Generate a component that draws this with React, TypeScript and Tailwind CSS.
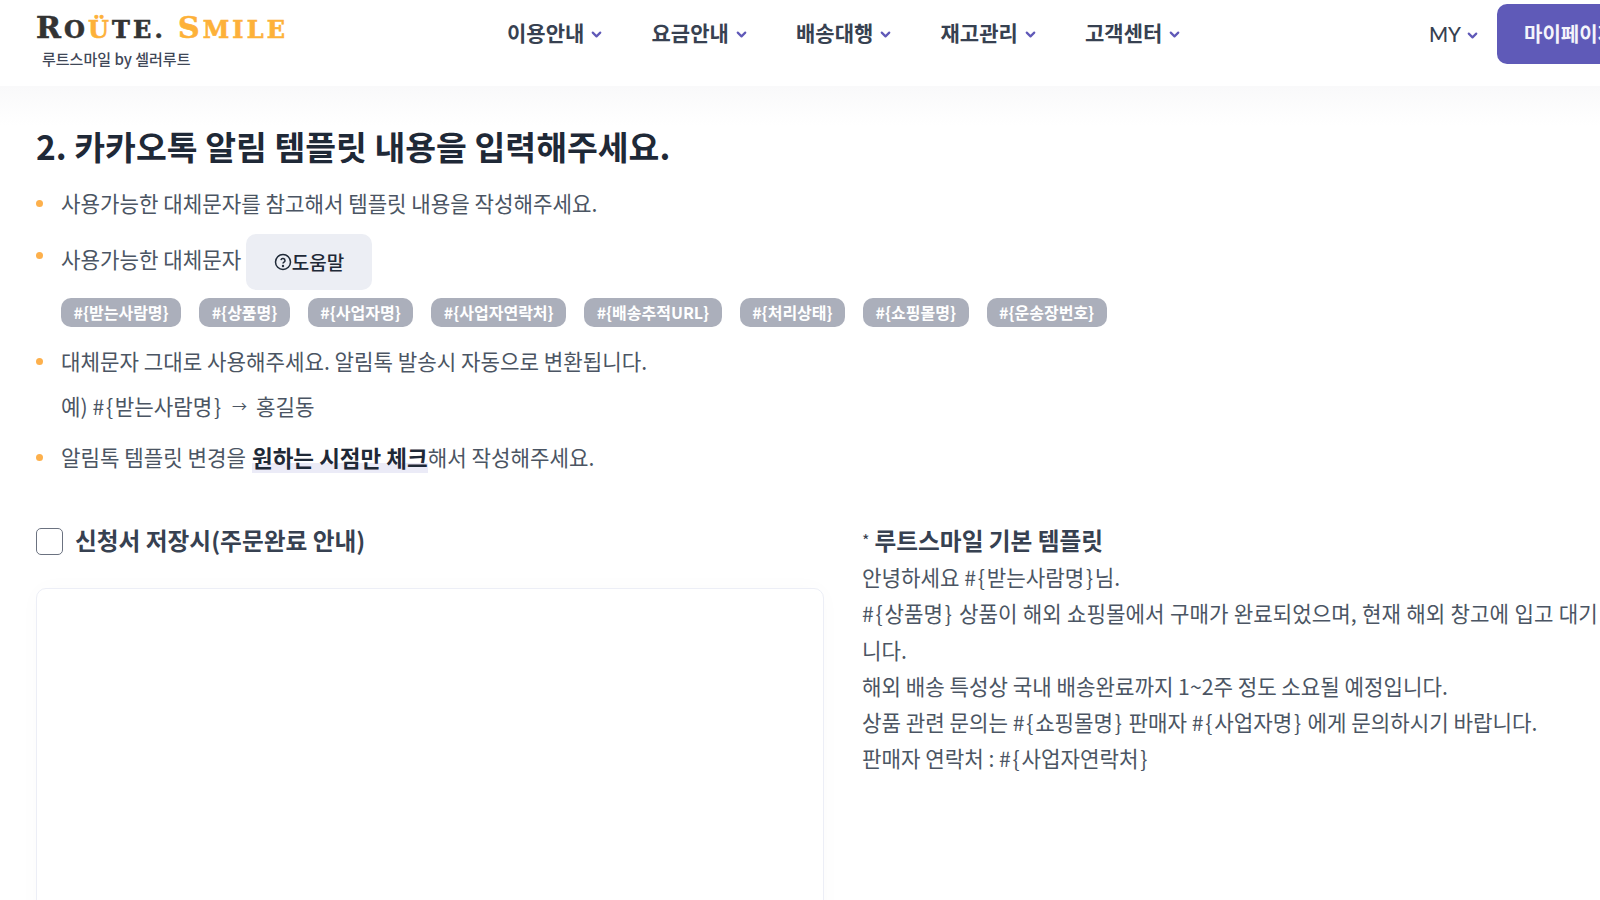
import { ChevronDown } from 'lucide-react';

const font = '[font-family:"Noto_Sans_CJK_KR","Noto_Sans",sans-serif]';

const navItems = ['이용안내', '요금안내', '배송대행', '재고관리', '고객센터'];

const tags = [
  '#{받는사람명}',
  '#{상품명}',
  '#{사업자명}',
  '#{사업자연락처}',
  '#{배송추적URL}',
  '#{처리상태}',
  '#{쇼핑몰명}',
  '#{운송장번호}',
];

function Bullet({ className = '' }: { className?: string }) {
  return <span className={`mr-[18px] h-[7px] w-[7px] shrink-0 rounded-full bg-[#fdb04c] ${className}`} />;
}

function Caret() {
  return <ChevronDown className="mt-[3px] h-[15px] w-[15px] text-[#6059b8]" strokeWidth={3.5} />;
}

// braces sit wider in the reference font
function Var({ name }: { name: string }) {
  return (
    <span>
      #<span className="mx-[1.75px]">&#123;</span>
      {name}
      <span className="mx-[1.75px]">&#125;</span>
    </span>
  );
}

function Logo() {
  const small = 'text-[24px]';
  return (
    <div className='flex h-[39px] items-baseline pt-[4px] text-[30px] font-bold leading-[34px] tracking-[3.1px] text-[#333333] [-webkit-text-stroke:0.6px_currentColor] [font-family:"DejaVu_Serif",serif]'>
      R<span className={small}>O</span>
      <span className={`${small} text-[#fdb139]`}>Ü</span>
      <span className={small}>TE.</span>
      <span className="ml-[12px] text-[#fdb139]">
        S<span className={small}>MILE</span>
      </span>
    </div>
  );
}

function Header() {
  return (
    <header className="flex h-[86px] items-start bg-white shadow-[0_4px_20px_rgba(0,0,0,0.02)]">
      <div className="ml-[36px] w-[424px] pt-[7px]">
        <Logo />
        <div className="ml-[6px] mt-[3px] text-[15px] font-medium leading-[20px] text-[#3f4757]">
          루트스마일 by 셀러루트
        </div>
      </div>
      <nav className="ml-[47px] flex h-[65px] items-center gap-[33.5px]">
        {navItems.map((item) => (
          <div key={item} className="flex w-[111px] items-center gap-[5px] text-[21px] font-bold text-[#374151]">
            {item}
            <Caret />
          </div>
        ))}
      </nav>
      <div className="ml-auto flex h-[66px] items-center">
        <div className='mr-[17px] mt-[2px] flex items-center gap-[4px] text-[20.5px] font-medium text-[#374151] [font-family:"Lato",sans-serif]'>
          MY
          <Caret />
        </div>
        <div className="mr-[-97px] mt-[2px] flex h-[60px] w-[200px] shrink-0 items-center rounded-[10px] bg-[#5f5ab8] pl-[27px] text-[20px] font-bold text-[#f4f4fb]">
          마이페이지
        </div>
      </div>
    </header>
  );
}

function Notices() {
  return (
    <div className="text-[21.2px] leading-[32px] text-[#4b5563]">
      <div className="mt-[17px] flex h-[32px] items-center">
        <Bullet />
        사용가능한 대체문자를 참고해서 템플릿 내용을 작성해주세요.
      </div>
      <div className="mt-[15px] flex h-[56px] items-center">
        <Bullet className="mb-[14px]" />
        <span className="mb-[6px]">사용가능한 대체문자</span>
        <div className="ml-[5px] flex h-[56px] w-[125.5px] items-center justify-center rounded-[10px] bg-[#eceef4] text-[19px] font-medium text-[#1f2937]">
          <svg viewBox="0 0 24 24" className="h-[18px] w-[18px]" fill="none" stroke="currentColor" strokeWidth="2">
            <circle cx="12" cy="12" r="10" />
            <path d="M9.2 9.5a2.8 2.8 0 0 1 5.5.7c0 1.9-2.7 2.2-2.7 3.8" />
            <circle cx="12" cy="17.4" r="0.6" />
          </svg>
          도움말
        </div>
      </div>
      <div className="ml-[25px] mt-[8px] flex gap-[18px]">
        {tags.map((tag) => (
          <span
            key={tag}
            className="flex h-[29px] items-center rounded-[10px] bg-[#abafbb] px-[12.5px] pb-[2px] text-[16px] font-bold leading-none text-white"
          >
            {tag}
          </span>
        ))}
      </div>
      <div className="mt-[18px] flex h-[32px] items-center">
        <Bullet />
        대체문자 그대로 사용해주세요. 알림톡 발송시 자동으로 변환됩니다.
      </div>
      <div className="ml-[25px] mt-[13px] flex h-[32px] items-center">
        예)&nbsp;
        <Var name="받는사람명" />
        <span className="mx-[9px] text-[15px]">→</span>
        홍길동
      </div>
      <div className="mt-[19px] flex h-[32px] items-center">
        <Bullet />
        알림톡 템플릿 변경을
        <strong className="ml-[6px] bg-[linear-gradient(transparent_70%,#ebebf7_70%)] text-[22.5px] font-bold text-[#1f2937]">
          원하는 시점만 체크
        </strong>
        해서 작성해주세요.
      </div>
    </div>
  );
}

function App() {
  return (
    <div className={`h-[900px] w-[1600px] overflow-hidden bg-white ${font}`}>
      <Header />
      <main className="bg-[linear-gradient(#f9f9fa,#ffffff_40px)] px-[36px] pt-[36px]">
        <h1 className="h-[48px] text-[33.5px] font-bold leading-[48px] text-[#1f2937]">
          2. 카카오톡 알림 템플릿 내용을 입력해주세요.
        </h1>
        <Notices />
        <div className="mt-[49px] flex">
          <section className="w-[788px] shrink-0">
            <label className="mt-[1px] flex h-[36px] items-center gap-[12px] text-[23.7px] font-bold text-[#374151]">
              <span className="h-[27px] w-[27px] rounded-[5px] border border-[#6b7280] bg-white" />
              신청서 저장시(주문완료 안내)
            </label>
            <div className="mt-[29px] h-[400px] rounded-[10px] border border-[#eceef6] bg-white shadow-[0_0_24px_rgba(0,0,0,0.02)]" />
          </section>
          <section className="ml-[38px] min-w-0 flex-1 whitespace-nowrap text-[21.2px] leading-[36.3px] text-[#4b5563]">
            <div className="flex h-[37px] items-center text-[23.7px] font-bold text-[#374151]">
              <span className="mr-[5px] text-[16px] font-normal">*</span>
              루트스마일 기본 템플릿
            </div>
            <p>
              안녕하세요 <Var name="받는사람명" />님.
            </p>
            <p className="[word-spacing:0.6px]">
              <Var name="상품명" /> 상품이 해외 쇼핑몰에서 구매가 완료되었으며, 현재 해외 창고에 입고 대기 중입
              <br />
              니다.
            </p>
            <p>해외 배송 특성상 국내 배송완료까지 1~2주 정도 소요될 예정입니다.</p>
            <p>
              상품 관련 문의는 <Var name="쇼핑몰명" /> 판매자 <Var name="사업자명" /> 에게 문의하시기 바랍니다.
            </p>
            <p>
              판매자 연락처 : <Var name="사업자연락처" />
            </p>
          </section>
        </div>
      </main>
    </div>
  );
}

export default App;
